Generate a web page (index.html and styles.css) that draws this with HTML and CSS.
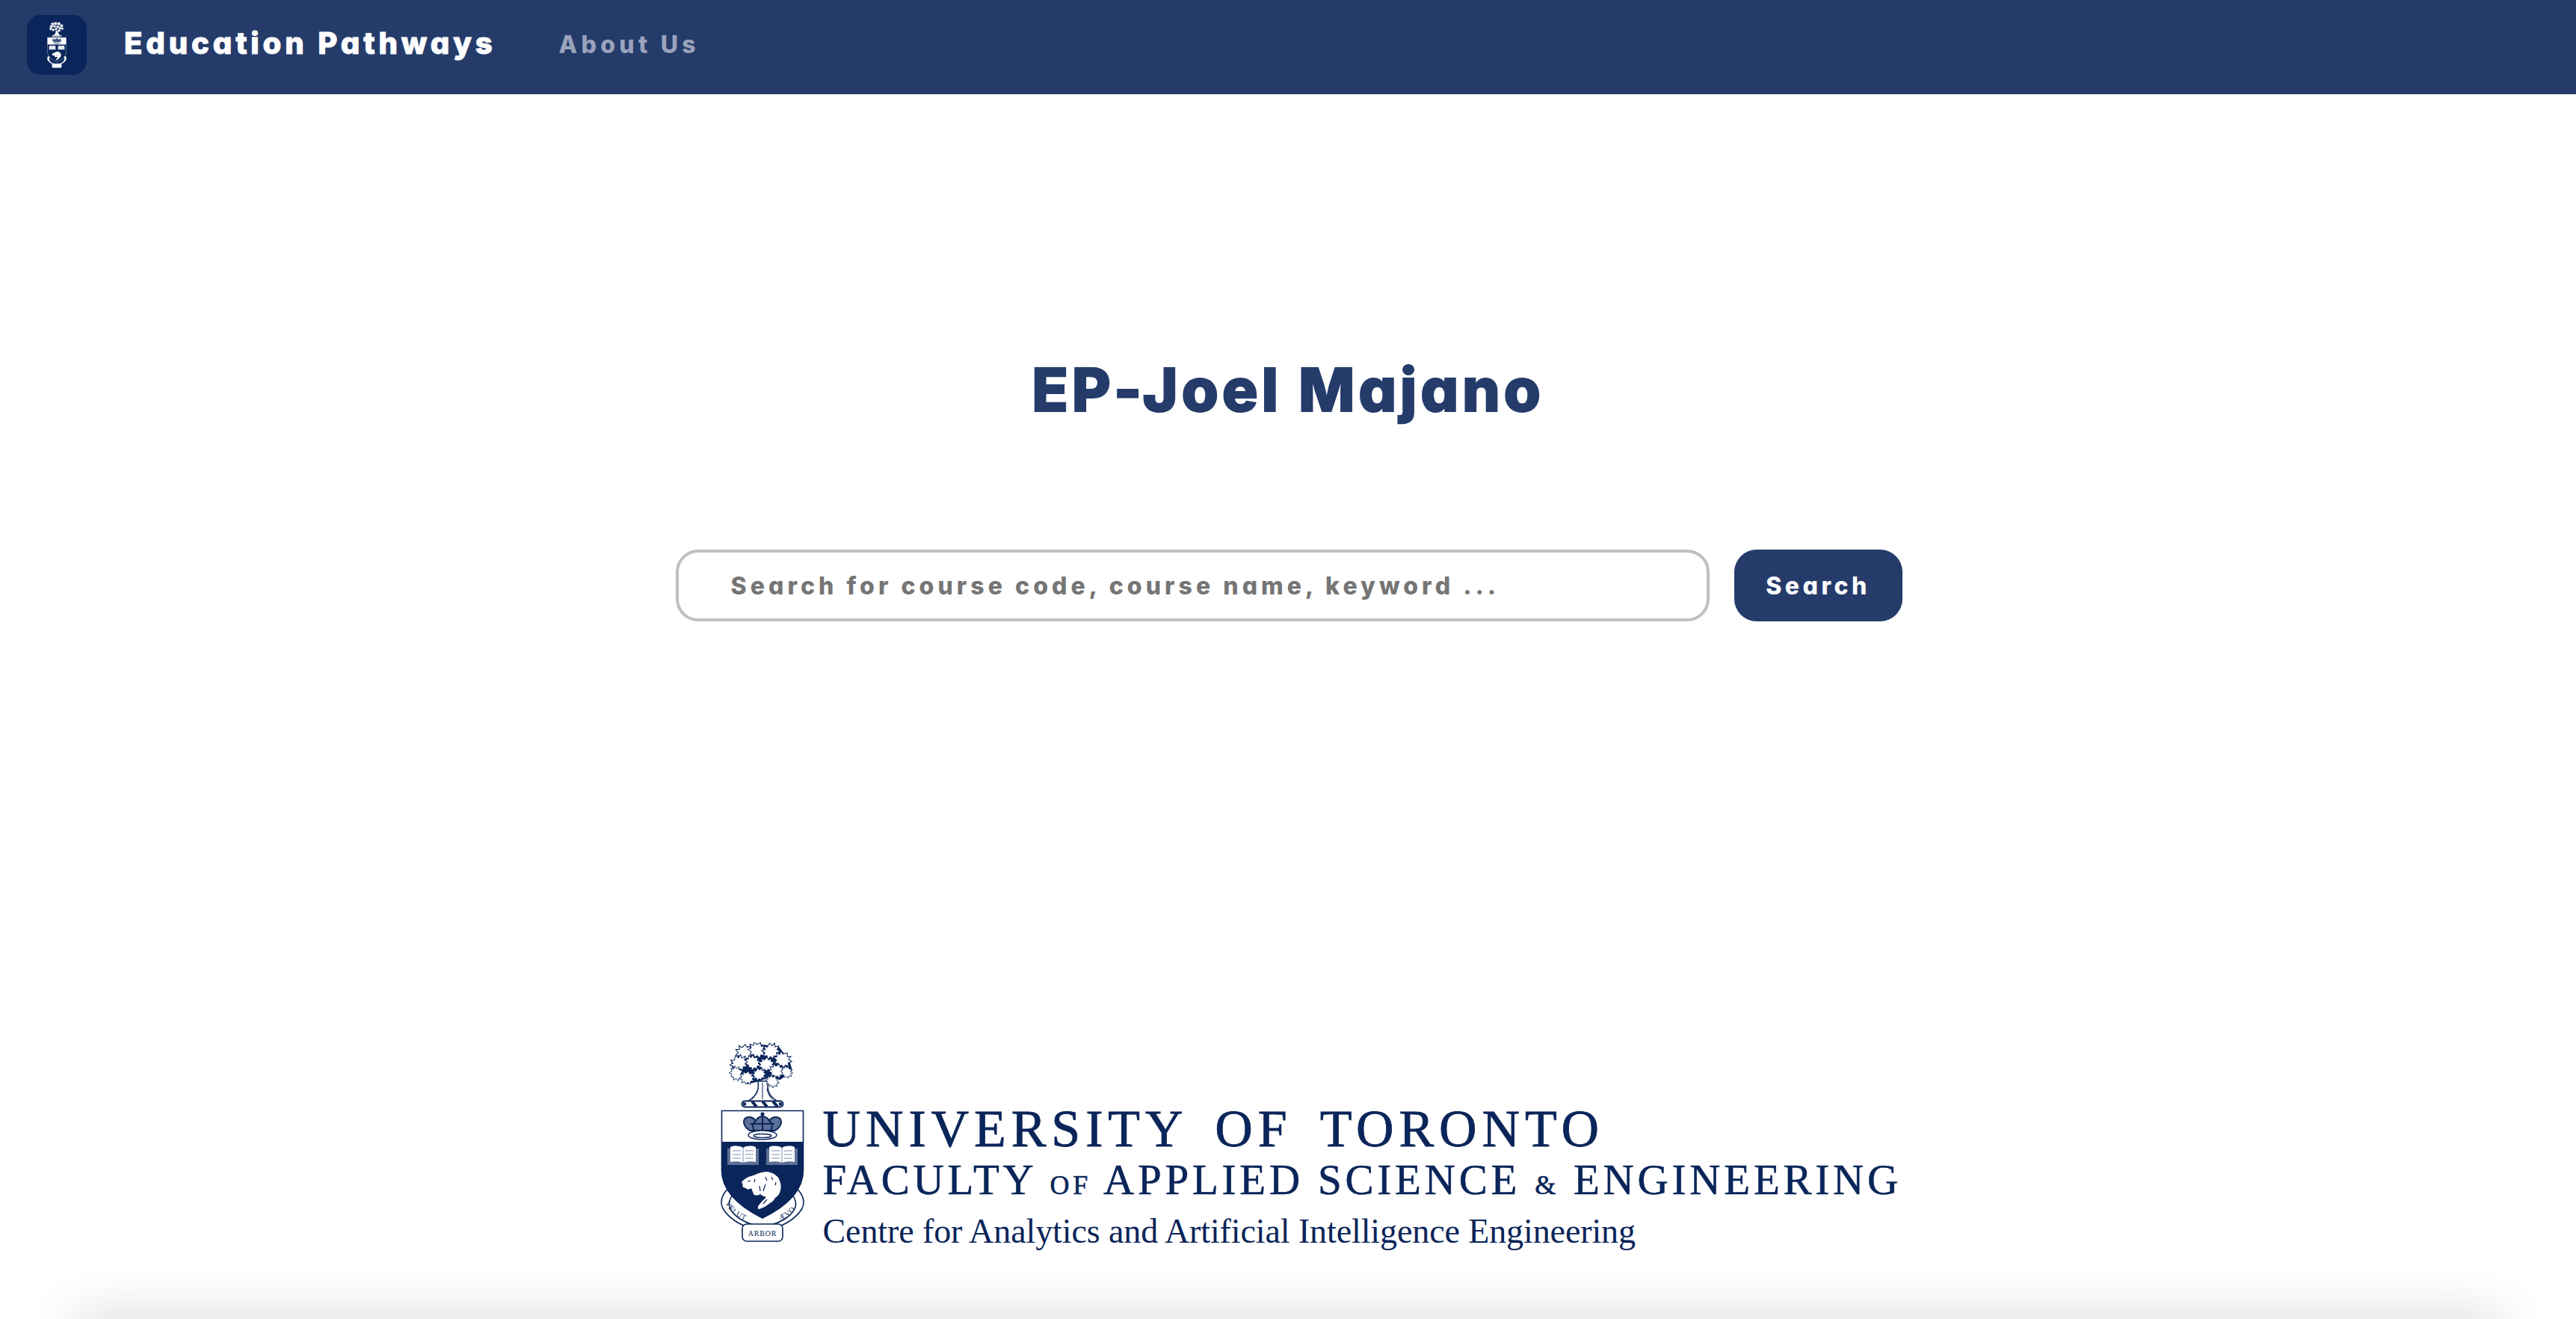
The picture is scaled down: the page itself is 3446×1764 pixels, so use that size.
FILE: index.html
```html
<!DOCTYPE html>
<html lang="en">
<head>
  <meta charset="UTF-8" />
  <title>Education Pathways</title>
  <link rel="stylesheet" href="styles.css">
</head>
<body>
  <!-- Crest, used in the navbar and in the faculty logo -->
  <svg class="sprite" width="0" height="0">
    <defs>
      <path id="leaf" d="M0-12l3 5 5-3-1 6 6 0-4 5 4 4-6 1 0 6-5-3-3 4-3-4-5 3 0-6-6-1 4-4-4-5 6 0-1-6 5 3z"/>
    </defs>
    <symbol id="crest" viewBox="0 0 112 268">
      <!-- tree -->
      <path class="crest-trunk" d="M50 52c2 12-2 20-14 27h40c-12-7-15-16-12-27z"/>
      <path class="crest-line-thin" d="M56 54v22M50 62c-2 6-4 10-8 14M62 62c1 6 3 10 7 14"/>
      <path class="crest-canopy" d="M34 6L56 3 78 6 92 24 96 38 80 50 62 48 52 52 36 56 18 42 14 28z"/>
      <g class="crest-leaf">
        <use href="#leaf" transform="translate(33 13) scale(.85)"/>
        <use href="#leaf" transform="translate(50 10) rotate(20) scale(.85)"/>
        <use href="#leaf" transform="translate(68 11) rotate(-15) scale(.85)"/>
        <use href="#leaf" transform="translate(84 23) rotate(30) scale(.85)"/>
        <use href="#leaf" transform="translate(25 27) rotate(-30) scale(.85)"/>
        <use href="#leaf" transform="translate(44 27) rotate(40) scale(.75)"/>
        <use href="#leaf" transform="translate(62 29) scale(.75)"/>
        <use href="#leaf" transform="translate(76 38) rotate(15) scale(.75)"/>
        <use href="#leaf" transform="translate(89 40) rotate(60) scale(.6)"/>
        <use href="#leaf" transform="translate(22 42) rotate(60) scale(.7)"/>
        <use href="#leaf" transform="translate(36 47) rotate(10) scale(.7)"/>
        <use href="#leaf" transform="translate(52 42) rotate(-20) scale(.65)"/>
        <use href="#leaf" transform="translate(70 52) rotate(30) scale(.65)"/>
      </g>
      <rect class="crest-ground" x="28.5" y="78.5" width="55" height="8" rx="4"/>
      <path class="crest-ground-bars" d="M30 82.500h4M42 79l6 7M56 79l6 7M70 79l6 7M78 82.500h4"/>

      <!-- scroll -->
      <g class="crest-scroll">
        <path d="M14 193C3 200-2 212 3 222 11 236 28 245 44 250V244C30 240 16 232 12 220 10 212 14 204 22 200z"/>
        <path d="M98 193C109 200 114 212 109 222 101 236 84 245 68 250V244C82 240 96 232 100 220 102 212 98 204 90 200z"/>
        <rect x="29" y="243" width="54" height="23" rx="6"/>
      </g>

      <!-- shield -->
      <path class="crest-panel" d="M2 92h108v41H2z"/>
      <path class="crest-field" d="M1.500 133h109v38c0 30-26 50-54.500 64C28 221 1.500 201 1.500 171z"/>
      <path class="crest-outline" d="M1.500 91.500h109v79.500c0 30-26 50-54.500 64C28 221 1.500 201 1.500 171z"/>

      <!-- crown -->
      <path class="crest-crown" d="M39 118C29 112 28 100 38 100c4 0 7 2 9 5 2-4 5-6 9-6s7 2 9 6c2-3 5-5 9-5 10 0 9 12-1 18z"/>
      <path class="crest-crown-arch" d="M45 118c-3-5-3-9 2-13M67 118c3-5 3-9-2-13M56 99v19M40 109h32"/>
      <circle class="crest-jewel" cx="56" cy="96" r="2.500"/>
      <ellipse class="crest-band" cx="56" cy="124" rx="19" ry="6"/>
      <ellipse class="crest-band" cx="56" cy="125" rx="12" ry="2.500"/>

      <!-- books -->
      <g class="crest-book">
        <path d="M9 142h42v22H9z"/>
        <path d="M61 142h42v22H61z"/>
      </g>
      <g class="crest-page">
        <path d="M13 140c5-2 12-2 17 1 5-3 12-3 17-1v20c-5-1-12-1-17 1-5-2-12-2-17-1z"/>
        <path d="M65 140c5-2 12-2 17 1 5-3 12-3 17-1v20c-5-1-12-1-17 1-5-2-12-2-17-1z"/>
      </g>
      <path class="crest-page-line" d="M30 141v20M16 145h11M16 150h11M16 155h11M33 145h11M33 150h11M33 155h11M82 141v20M68 145h11M68 150h11M68 155h11M85 145h11M85 150h11M85 155h11"/>

      <!-- beaver -->
      <path class="crest-beaver" d="M28 187C32 182 38 179 44 178 50 175 57 173 63 173 72 175 78 180 79 185 81 190 81 194 80 198 79 203 76 206 73 208 71 212 68 214 66 215 62 219 56 222 51 223 49 222 50 219 51 218 54 214 58 210 61 207 58 206 55 205 53 203 50 205 46 205 44 203 43 200 42 197 41 195 38 197 35 197 34 195 32 195 30 194 29 192 31 191 29 189 28 187z"/>
      <path class="crest-fur" d="M36 186l4-1M46 183l-1 4M60 180l2 5M68 180l2 4M74 187l-1 4M60 190l-3 9M52 192l1 7M62 210l-5 6"/>
    </symbol>
  </svg>

  <nav class="navbar">
    <div class="nav-logo">
      <svg class="nav-crest"><use href="#crest"></use></svg>
    </div>
    <a class="brand" href="#">Education Pathways</a>
    <a class="nav-link" href="#">About Us</a>
  </nav>

  <main class="main">
    <h1 class="title">EP-Joel Majano</h1>

    <form class="search">
      <input class="search-input" type="text" placeholder="Search for course code, course name, keyword ..." />
      <button class="search-btn" type="button">Search</button>
    </form>

    <div class="faculty">
      <svg class="faculty-crest" viewBox="0 0 112 268">
        <defs>
          <path id="scroll-left" d="M5 213C11 227 25 237 42 241"/>
          <path id="scroll-right" d="M70 241C87 237 101 227 107 211"/>
        </defs>
        <use href="#crest" width="112" height="268"></use>
        <text class="crest-motto"><textPath href="#scroll-left" startOffset="2">VELUT</textPath></text>
        <text class="crest-motto"><textPath href="#scroll-right" startOffset="10">ÆVO</textPath></text>
        <text class="crest-motto" x="56" y="259" text-anchor="middle">ARBOR</text>
      </svg>
      <div class="faculty-text">
        <div class="uni">UNIVERSITY OF TORONTO</div>
        <div class="fase">FACULTY <span class="fase-small">OF</span> APPLIED SCIENCE <span class="fase-small">&amp;</span> ENGINEERING</div>
        <div class="centre">Centre for Analytics and Artificial Intelligence Engineering</div>
      </div>
    </div>
  </main>

  <footer class="footer"></footer>
</body>
</html>
```

FILE: styles.css
```css
* {
  box-sizing: border-box;
}

html,
body {
  height: 100%;
  overflow: hidden;
}

body {
  margin: 0;
  background: white;
  font-family: "Inter", "Noto Sans", sans-serif;
  font-feature-settings: "cv11";
  --navy: #0a2559;
  --line: #0a2559;
}

.sprite {
  position: absolute;
}

.navbar {
  height: 126px;
  background: #253c6b;
  display: flex;
  align-items: center;
  padding: 0 0 6px 36px;
}

.nav-logo {
  width: 80px;
  height: 80px;
  border-radius: 18px;
  background: var(--navy);
  display: flex;
  align-items: center;
  justify-content: center;
  --line: #e8ebf2;
}

.nav-crest {
  width: 26px;
  height: 62px;
}

.brand {
  margin-left: 50px;
  margin-top: -5px;
  color: white;
  font-size: 40px;
  font-weight: 800;
  letter-spacing: 4.9px;
  -webkit-text-stroke: 1px white;
  text-decoration: none;
}

.nav-link {
  margin-left: 84px;
  margin-top: -2px;
  color: #9aa3bb;
  font-size: 32px;
  font-weight: 800;
  letter-spacing: 5.3px;
  text-decoration: none;
}

.main {
  height: calc(100vh - 126px);
  display: flex;
  flex-direction: column;
  align-items: center;
}

.title {
  margin: 346px 0 0;
  color: #253c6b;
  font-size: 80px;
  line-height: 98px;
  font-weight: 800;
  letter-spacing: 4.7px;
  -webkit-text-stroke: 2px #253c6b;
}

.search {
  margin-top: 165px;
  margin-left: 2px;
  display: flex;
  gap: 33px;
}

.search-input {
  width: 1383px;
  height: 96px;
  padding: 0 70px;
  border: 4px solid #c0c0c0;
  border-radius: 30px;
  outline: none;
  font-family: inherit;
  font-feature-settings: "cv11";
  font-size: 32px;
  font-weight: 800;
  letter-spacing: 5.05px;
}

.search-input::placeholder {
  color: #757575;
  opacity: 1;
}

.search-btn {
  width: 225px;
  height: 96px;
  background: #253c6b;
  color: white;
  border: none;
  border-radius: 30px;
  font-family: inherit;
  font-feature-settings: "cv11";
  font-size: 32px;
  font-weight: 800;
  letter-spacing: 4.5px;
  cursor: pointer;
}

.faculty {
  margin-top: 563px;
  margin-left: 61px;
  display: flex;
  align-items: flex-start;
  gap: 25px;
  width: 1580px;
}

.faculty-crest {
  flex: none;
  width: 112px;
  height: 268px;
}

.faculty-text {
  padding-top: 79px;
  color: var(--navy);
  font-family: "Liberation Serif", "Times New Roman", serif;
  white-space: nowrap;
}

.uni {
  font-size: 70px;
  line-height: 74px;
  word-spacing: 14px;
  letter-spacing: 6.9px;
  -webkit-text-stroke: 0.8px var(--navy);
}

.fase {
  font-size: 57px;
  line-height: 62px;
  letter-spacing: 4.8px;
  -webkit-text-stroke: 0.6px var(--navy);
}

.fase-small {
  font-size: 36px;
}

.centre {
  font-size: 46px;
  line-height: 62px;
  letter-spacing: -0.1px;
}

.footer {
  height: 40px;
  margin: 0 100px;
  box-shadow: 0 0 70px rgba(0, 0, 0, 0.2);
}

/* crest parts */
.crest-trunk {
  fill: #fff;
  stroke: var(--line);
  stroke-width: 1.5;
}

.crest-line-thin {
  fill: none;
  stroke: var(--line);
  stroke-width: 1;
}

.crest-canopy {
  fill: var(--navy);
}

.crest-leaf {
  fill: #fff;
  stroke: var(--navy);
  stroke-width: 1.2;
}

.crest-ground {
  fill: #fff;
  stroke: var(--line);
  stroke-width: 2;
}

.crest-ground-bars {
  fill: none;
  stroke: var(--navy);
  stroke-width: 4;
}

.crest-scroll {
  fill: #fff;
  stroke: var(--line);
  stroke-width: 1.6;
}

.crest-motto {
  fill: var(--navy);
  font-family: "Liberation Serif", serif;
  font-feature-settings: normal;
  font-size: 10px;
  letter-spacing: 0.8px;
}

.crest-panel {
  fill: #fff;
}

.crest-field {
  fill: var(--navy);
}

.crest-outline {
  fill: none;
  stroke: var(--line);
  stroke-width: 1.6;
}

.crest-crown {
  fill: #5d7096;
  stroke: var(--navy);
  stroke-width: 2;
}

.crest-crown-arch {
  fill: none;
  stroke: var(--navy);
  stroke-width: 2;
}

.crest-jewel {
  fill: var(--navy);
}

.crest-band {
  fill: #fff;
  stroke: var(--navy);
  stroke-width: 1.4;
}

.crest-book {
  fill: #5d7096;
}

.crest-page {
  fill: #fff;
}

.crest-page-line {
  fill: none;
  stroke: #7e8eae;
  stroke-width: 1;
}

.crest-beaver {
  fill: #fff;
}

.crest-fur {
  fill: none;
  stroke: var(--navy);
  stroke-width: 1.2;
}
```
